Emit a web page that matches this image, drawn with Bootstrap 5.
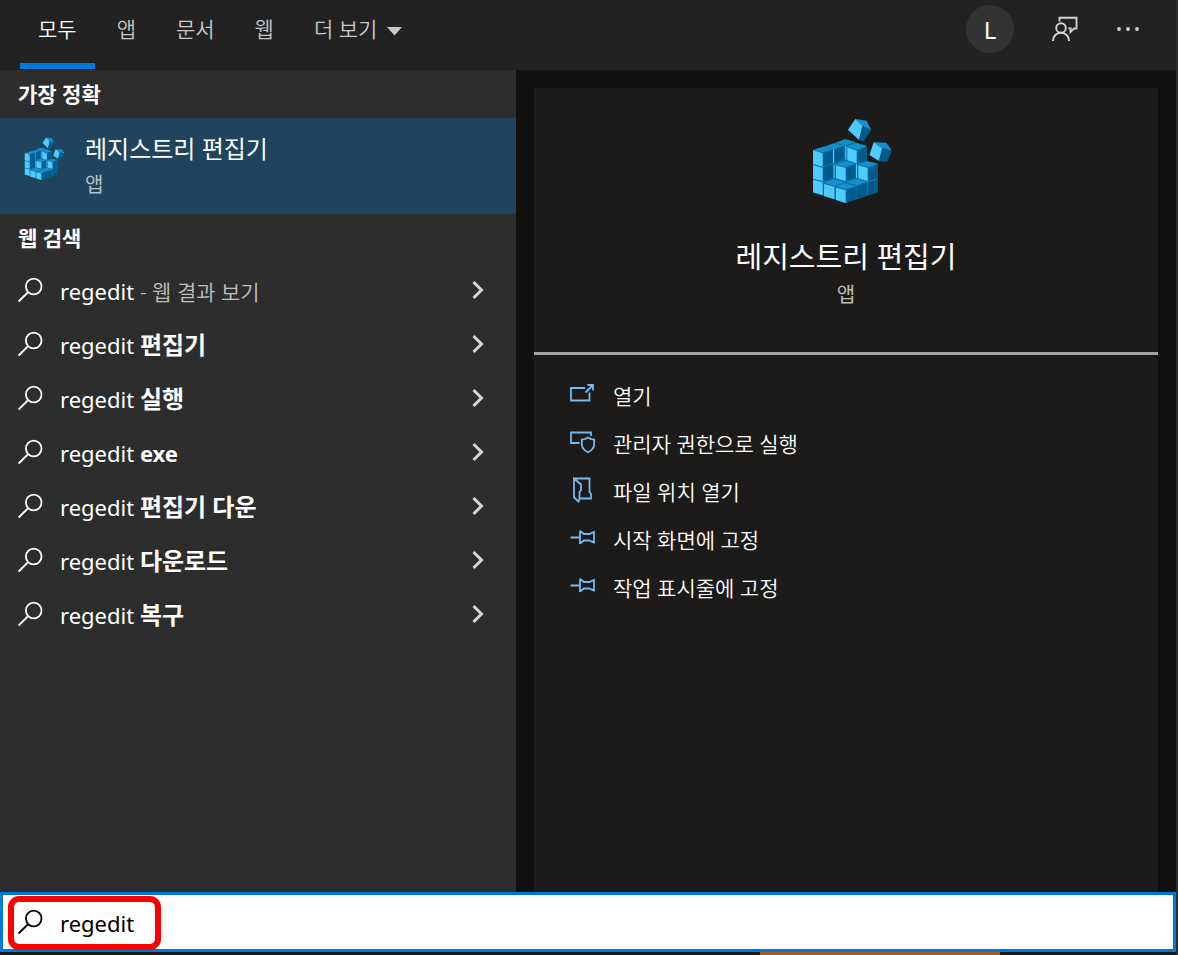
<!DOCTYPE html>
<html lang="ko">
<head>
<meta charset="utf-8">
<meta name="viewport" content="width=device-width, initial-scale=1">
<title>검색</title>
<link rel="stylesheet" href="https://cdn.jsdelivr.net/npm/bootstrap@5.3.0/dist/css/bootstrap.min.css">
<style>
  body { background: #1c1b1b; color: #fff; font-family: "Noto Sans", "Noto Sans CJK KR", sans-serif; font-size: 22px; line-height: 28px; }
  svg { flex: none; }
  .search-window { border-right: 2px solid #2c2c2e; }
  .top-bar { background: #222; height: 70px; padding: 0 36px 0 20px; }
  .scope-tabs { gap: 4px; }
  .scope-tabs .nav-link { color: #c8c8c8; height: 69px; padding: 14px 18px 0; border-bottom: 6px solid transparent; font-size: 21px; font-weight: 350; line-height: 30px; }
  .scope-tabs .nav-link.active { color: #fff; border-color: #0078d7; }
  .bar-button { background: none; border: 0; padding: 0; color: #d2d2d2; }
  .avatar { width: 48px; height: 48px; padding-top: 2px; background: #333; color: #fff; font-size: 24px; }
  .top-tools { gap: 38px; height: 58px; }
  .results { width: 516px; background: #2d2d2d; }
  .group-title { font-size: 21px; font-weight: 700; height: 48px; line-height: 48px; padding-left: 18px; margin: 0; }
  .result-link { color: #fff; text-decoration: none; }
  .best-match { background: #20435e; height: 96px; padding: 15px 24px; gap: 20px; }
  .best-match .app-name { font-size: 24px; line-height: 32px; word-spacing: normal; }
  .app-kind { color: #bdbdbd; font-size: 20px; line-height: 28px; }
  .best-match .app-kind { margin-top: 6px; color: #b5c0c9; }
  .suggestions { padding-top: 1px; }
  .suggestion { height: 54px; padding: 0 32px 0 18px; gap: 16px; }
  .suggestion span { padding-top: 2px; }
  .suggestion b { font-size: 24px; }
  .suggestion b.latin { font-size: 22px; }
  .suggestion small { color: #c0c0c0; font-size: 21px; font-weight: 350; }
  .preview { background: #11100f; padding: 18px 18px 0; }
  .preview-panel { background: #1c1b19; }
  .hero { height: 267px; padding-top: 30px; border-bottom: 3px solid #a3a3a3; }
  .hero svg { margin-left: 12px; }
  .hero h1 { font-size: 29px; line-height: 40px; font-weight: 400; margin: 34px 0 4px; }
  .actions { padding: 17px 36px; }
  .action { height: 48px; color: #fff; gap: 17px; font-size: 21px; font-weight: 350; }
  .action svg { stroke: #76b9ed; margin-bottom: 4px; }
  .query { background: #fff; border: 3px solid #0078d7; height: 60px; padding-left: 15px; gap: 16px; }
  .query input { border: 0; outline: 0; color: #000; background: transparent; padding: 2px 0 0; height: 48px; }
  .callout { left: 5px; top: 1px; width: 153px; height: 54px; border: 6px solid #f00; border-radius: 11px; pointer-events: none; }
  .taskbar { height: 3px; }
  .taskbar-item { width: 240px; margin-left: 760px; background: #a75a21; }
</style>
<script src="https://cdn.jsdelivr.net/npm/bootstrap@5.3.0/dist/js/bootstrap.bundle.min.js"></script>
</head>
<body>
<svg width="0" height="0" class="position-absolute" aria-hidden="true">
  <symbol id="registry" viewBox="66 24 240 255">
    <path fill="#0873aa" d="M69 120 167 88 230 108 232 154 263 161V247L167 279 69 248Z"/>
    <g fill="#1590cf">
      <path d="M69 120 100 111 128 118 98 127ZM104 110 132 101 161 107 132 117ZM138 98 167 88 196 96 167 105ZM172 109 198 99 230 108 200 119Z"/>
      <path d="M138 163 167 154 196 161 167 171ZM205 163 233 154 263 161 233 171ZM102 218 133 208 165 217 133 227ZM138 230 167 220 197 228 167 238ZM167 216 200 207 231 215 199 225Z"/>
    </g>
    <g fill="#005b8c">
      <path d="M100 130 128 120V160L100 170ZM134 119 161 109V148L134 158ZM202 122 230 111V150L202 160ZM100 173 129 163V204L100 213ZM169 174 196 164V204L169 213ZM235 174 263 163V204L235 212ZM169 241 197 231V268L169 278ZM200 229 230 219V257L200 267ZM234 218 263 208V247L234 256Z"/>
    </g>
    <g fill="#4fcbfb">
      <path d="M69 121 98 130V170L69 162ZM172 112 200 122V160L172 151ZM69 165 98 174V213L69 206ZM138 166 167 174V213L138 205ZM205 166 233 174V213L205 205ZM69 209 98 217V255L69 247ZM102 222 133 230V267L102 258ZM138 233 167 241V279L138 270ZM129 118 132 119V159L129 158ZM166 107 169 108V149L166 148ZM131 163 134 163V204L131 204ZM198 163 201 163V204L198 204Z"/>
    </g>
    <path fill="#1590cf" d="M196 27 230 32 244 60 216 48ZM251 97 289 98 306 122 277 115Z"/>
    <path fill="#4fcbfb" d="M196 27 217 48 208 91 174 59ZM251 97 277 115 268 154 238 135Z"/>
    <path fill="#005b8c" d="M217 48 244 60 222 94 207 90ZM277 115 306 122 291 156 266 154Z"/>
  </symbol>
  <symbol id="lens" viewBox="0 0 26 26"><g fill="none" stroke="currentColor" stroke-width="1.8"><circle cx="15.700" cy="9.500" r="7.800"/><path d="M10.200 15 .6 24.500"/></g></symbol>
  <symbol id="chevron" viewBox="0 0 12 20"><path d="m1.500 2 8 8-8 8" fill="none" stroke="#d6d6d6" stroke-width="3"/></symbol>
  <symbol id="pin" viewBox="0 0 26 26"><path d="M.5 12.500H10M10 5.500v13.500M10 6l4 3h5.500l4.500-2v10.500l-4.500-2H14l-4 3" fill="none" stroke-width="1.800"/></symbol>
</svg>

<div class="search-window d-flex flex-column min-vh-100">
  <header class="top-bar d-flex justify-content-between">
    <nav class="nav scope-tabs flex-nowrap" aria-label="검색 범위">
      <a class="nav-link active" href="#" aria-current="page">모두</a>
      <a class="nav-link" href="#">앱</a>
      <a class="nav-link" href="#">문서</a>
      <a class="nav-link" href="#">웹</a>
      <a class="nav-link" href="#">더 보기 <svg class="ms-1" width="15" height="9" viewBox="0 0 15 9"><path fill="currentColor" d="M0 0h15L7.500 8.500z"/></svg></a>
    </nav>
    <div class="top-tools d-flex align-items-center">
      <button class="bar-button avatar rounded-circle" type="button">L</button>
      <button class="bar-button d-flex" type="button" aria-label="피드백">
        <svg width="26" height="26" viewBox="0 0 26 26" fill="none" stroke="currentColor" stroke-width="1.900"><circle cx="9" cy="12" r="4.800"/><path d="M1 25c0-5 3.500-8.200 8-8.200s8 3.200 8 8.200M7.500 5.500V1.800H24.500v10.700H22L18.500 16v-3.800h-2"/></svg>
      </button>
      <button class="bar-button d-flex" type="button" aria-label="옵션">
        <svg width="24" height="6" viewBox="0 0 24 6" fill="currentColor"><circle cx="3" cy="3" r="1.900"/><circle cx="12" cy="3" r="1.900"/><circle cx="21" cy="3" r="1.900"/></svg>
      </button>
    </div>
  </header>

  <main class="d-flex flex-grow-1">
    <section class="results flex-shrink-0">
      <h2 class="group-title">가장 정확</h2>
      <a class="result-link best-match d-flex" href="#">
        <svg class="mt-1" width="41" height="43"><use href="#registry"/></svg>
        <span class="d-flex flex-column"><span class="app-name">레지스트리 편집기</span><span class="app-kind">앱</span></span>
      </a>
      <h2 class="group-title">웹 검색</h2>
      <nav class="suggestions" aria-label="웹 검색">
        <a class="result-link suggestion d-flex align-items-center" href="#"><svg width="26" height="26"><use href="#lens"/></svg><span class="flex-grow-1">regedit <small>- 웹 결과 보기</small></span><svg width="12" height="20"><use href="#chevron"/></svg></a>
        <a class="result-link suggestion d-flex align-items-center" href="#"><svg width="26" height="26"><use href="#lens"/></svg><span class="flex-grow-1">regedit <b>편집기</b></span><svg width="12" height="20"><use href="#chevron"/></svg></a>
        <a class="result-link suggestion d-flex align-items-center" href="#"><svg width="26" height="26"><use href="#lens"/></svg><span class="flex-grow-1">regedit <b>실행</b></span><svg width="12" height="20"><use href="#chevron"/></svg></a>
        <a class="result-link suggestion d-flex align-items-center" href="#"><svg width="26" height="26"><use href="#lens"/></svg><span class="flex-grow-1">regedit <b class="latin">exe</b></span><svg width="12" height="20"><use href="#chevron"/></svg></a>
        <a class="result-link suggestion d-flex align-items-center" href="#"><svg width="26" height="26"><use href="#lens"/></svg><span class="flex-grow-1">regedit <b>편집기 다운</b></span><svg width="12" height="20"><use href="#chevron"/></svg></a>
        <a class="result-link suggestion d-flex align-items-center" href="#"><svg width="26" height="26"><use href="#lens"/></svg><span class="flex-grow-1">regedit <b>다운로드</b></span><svg width="12" height="20"><use href="#chevron"/></svg></a>
        <a class="result-link suggestion d-flex align-items-center" href="#"><svg width="26" height="26"><use href="#lens"/></svg><span class="flex-grow-1">regedit <b>복구</b></span><svg width="12" height="20"><use href="#chevron"/></svg></a>
      </nav>
    </section>

    <section class="preview flex-grow-1 d-flex">
      <div class="preview-panel flex-grow-1">
        <div class="hero d-flex flex-column align-items-center">
          <svg width="80" height="85"><use href="#registry"/></svg>
          <h1>레지스트리 편집기</h1>
          <div class="app-kind">앱</div>
        </div>
        <div class="actions d-flex flex-column align-items-start">
          <button class="bar-button action d-flex align-items-center" type="button"><svg width="26" height="26" viewBox="0 0 26 26" fill="none" stroke-width="1.800"><path d="M15 7H1v12.500h18.500v-8M15.500 11.500l7-7M17.500 4H23v5.500"/></svg>열기</button>
          <button class="bar-button action d-flex align-items-center" type="button"><svg width="26" height="26" viewBox="0 0 26 26" fill="none" stroke-width="1.800"><path d="M9.500 14H1V3.500h20V7M18 8.500q3 2.200 6.200 2.200v4.500q0 5-6.200 8-6.200-3-6.200-8v-4.500q3.200 0 6.200-2.200Z"/></svg>관리자 권한으로 실행</button>
          <button class="bar-button action d-flex align-items-center" type="button"><svg width="26" height="26" viewBox="0 0 26 26" fill="none" stroke-width="1.800"><path d="M4 1.500h15.500v13.500l1.500 2v4.500H9.500M4 1.500v19l4.500 4 1-2.500V15l1.500-2V7.500L4 1.500Z"/></svg>파일 위치 열기</button>
          <button class="bar-button action d-flex align-items-center" type="button"><svg width="26" height="26"><use href="#pin"/></svg>시작 화면에 고정</button>
          <button class="bar-button action d-flex align-items-center" type="button"><svg width="26" height="26"><use href="#pin"/></svg>작업 표시줄에 고정</button>
        </div>
      </div>
    </section>
  </main>

  <form class="query position-relative d-flex align-items-center text-black" role="search">
    <svg width="26" height="26"><use href="#lens"/></svg>
    <input class="flex-grow-1" type="text" value="regedit" aria-label="검색어">
    <div class="callout position-absolute"></div>
  </form>
  <footer class="taskbar d-flex"><div class="taskbar-item"></div></footer>
</div>
</body>
</html>
